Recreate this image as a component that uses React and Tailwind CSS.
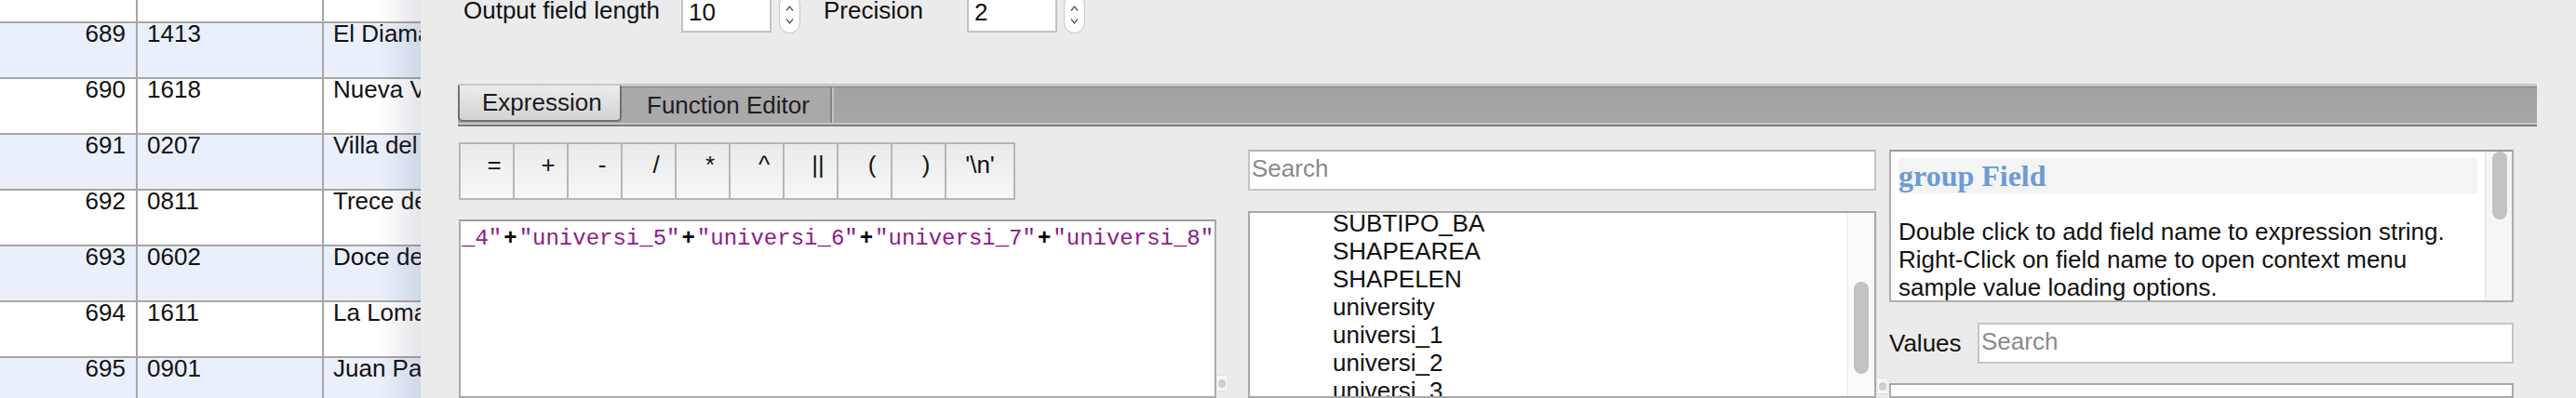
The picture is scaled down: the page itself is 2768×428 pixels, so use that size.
import React from "react";

const rows = [
  { n: 689, c: "1413", name: "El Diamante" },
  { n: 690, c: "1618", name: "Nueva Villa" },
  { n: 691, c: "0207", name: "Villa del Sol" },
  { n: 692, c: "0811", name: "Trece de Abril" },
  { n: 693, c: "0602", name: "Doce de Octubre" },
  { n: 694, c: "1611", name: "La Loma" },
  { n: 695, c: "0901", name: "Juan Pablo II" },
];

function Table() {
  return (
    <div className="relative w-[452px] shrink-0 h-full overflow-hidden bg-white">
      <div className="flex h-[25px] border-b-2 border-[#a6a6a6]">
        <div className="w-[148px] shrink-0 border-r-2 border-[#a6a6a6]" />
        <div className="w-[200px] shrink-0 border-r-2 border-[#a6a6a6]" />
        <div className="flex-1" />
      </div>
      {rows.map((r, i) => (
        <div
          key={r.n}
          className={
            i % 2 === 0
              ? "flex h-[60px] border-b-2 border-[#a6a6a6] bg-[#e9f0fc]"
              : "flex h-[60px] border-b-2 border-[#a6a6a6] bg-white"
          }
        >
          <div className="w-[148px] shrink-0 border-r-2 border-[#a6a6a6] text-right pr-[11px] leading-[22px]">
            {r.n}
          </div>
          <div className="w-[200px] shrink-0 border-r-2 border-[#a6a6a6] pl-[10px] leading-[22px]">
            {r.c}
          </div>
          <div className="flex-1 pl-[10px] whitespace-nowrap overflow-hidden leading-[22px]">
            {r.name}
          </div>
        </div>
      ))}
      <div className="absolute top-0 right-0 h-full w-[44px] bg-linear-to-r from-transparent to-[rgba(60,70,90,0.14)]" />
    </div>
  );
}

function Spinner({ className }) {
  return (
    <div
      className={
        "w-[23px] h-[42px] shrink-0 rounded-full bg-white border border-[#c4c4c4] flex flex-col items-center justify-between pt-[11px] pb-[9px] " +
        className
      }
    >
      <svg width="9" height="6" viewBox="0 0 9 6">
        <path d="M1 5.5 L4.5 1 L8 5.5" stroke="#555" fill="none" strokeWidth="1.3" />
      </svg>
      <svg width="9" height="6" viewBox="0 0 9 6">
        <path d="M1 0.5 L4.5 5 L8 0.5" stroke="#555" fill="none" strokeWidth="1.3" />
      </svg>
    </div>
  );
}

const ops = ["=", "+", "-", "/", "*", "^", "||", "(", ")"];

function Handle() {
  return (
    <div className="w-[10px] h-[18px] bg-[#f7f7f7] border-y border-[#dcdcdc] flex items-center justify-center">
      <div className="w-[8px] h-[9px] rounded-full bg-[#cfcfcf]" />
    </div>
  );
}

function Plus() {
  return <span className="text-black font-bold mx-[2px]">+</span>;
}

function Dialog() {
  return (
    <div className="flex-1 flex flex-col min-w-0 bg-[#ebebeb]">
      {/* top row */}
      <div className="flex items-start h-[42px] mt-[-6px] pl-[46px] shrink-0">
        <span className="mt-[2px] leading-[30px] w-[234px] shrink-0 whitespace-nowrap">
          Output field length
        </span>
        <div className="w-[97px] h-[41px] shrink-0 bg-white border-2 border-[#c2c2c2] pl-[6px] pt-[2px] leading-[30px]">
          10
        </div>
        <Spinner className="ml-[8px]" />
        <span className="ml-[25px] mt-[2px] leading-[30px] w-[154px] shrink-0">Precision</span>
        <div className="w-[97px] h-[41px] shrink-0 bg-white border-2 border-[#c2c2c2] pl-[6px] pt-[2px] leading-[30px]">
          2
        </div>
        <Spinner className="ml-[7px]" />
      </div>

      {/* tab bar */}
      <div className="mt-[54px] ml-[40px] w-[2234px] shrink-0 border-t-[3px] border-t-[#c8c8c8] border-b-2 border-b-[#7c7c7c]">
        <div className="h-[41px] border-t border-t-[#808080] border-b-2 border-b-[#c5c5c5] bg-linear-to-b from-[#a1a1a1] to-[#a7a7a7] flex items-start">
          <div className="mt-[-2px] h-[39px] w-[176px] shrink-0 bg-linear-to-b from-[#ececec] to-[#d2d2d2] border-x-2 border-b-2 border-[#707070] rounded-b-[5px] pl-[24px] flex items-center text-[#1a1a1a]">
            Expression
          </div>
          <div className="h-[38px] w-[226px] shrink-0 bg-[#a9a9a9] border-r-2 border-[#858585] shadow-[2px_0_0_#c3c3c3] pl-[27px] flex items-center text-[#1e1e1e]">
            Function Editor
          </div>
        </div>
      </div>

      {/* lower area */}
      <div className="flex mt-[17px] ml-[41px] flex-1 min-h-0">
        {/* left column */}
        <div className="w-[814px] shrink-0 flex flex-col">
          <div className="flex h-[62px] w-max border-y-2 border-l-2 border-[#b6b6b6]">
            {ops.map((o) => (
              <div
                key={o}
                className="w-[58px] h-full border-r-2 border-[#b6b6b6] bg-linear-to-b from-[#eaeaea] to-[#f7f7f7] flex items-center justify-center pl-[16px] pb-[14px]"
              >
                {o}
              </div>
            ))}
            <div className="w-[74px] h-full border-r-2 border-[#b6b6b6] bg-linear-to-b from-[#eaeaea] to-[#f7f7f7] flex items-center justify-center pb-[14px]">
              {"'\\n'"}
            </div>
          </div>
          <div className="mt-[21px] flex-1 bg-white border-2 border-[#acacac] border-t-[#9c9c9c] pl-[1px] pt-[5px] font-['Liberation_Mono',monospace] text-[24px] leading-[28px] text-[#8b1a89] whitespace-nowrap overflow-hidden">
            _4"<Plus />"universi_5"<Plus />"universi_6"<Plus />"universi_7"<Plus />"universi_8"
          </div>
        </div>

        {/* splitter gap */}
        <div className="w-[34px] shrink-0 pt-[250px] pl-[1px]">
          <Handle />
        </div>

        {/* middle column */}
        <div className="w-[675px] shrink-0 mt-[8px] flex flex-col">
          <div className="h-[44px] shrink-0 bg-white border-2 border-[#c3c3c3] border-t-[#b2b2b2] pl-[2px] pb-[3px] flex items-center text-[#8a8a8a]">
            Search
          </div>
          <div className="mt-[22px] flex-1 bg-white border-2 border-[#a8a8a8] flex overflow-hidden">
            <div className="flex-1 pl-[89px] mt-[-4px] leading-[30px] whitespace-nowrap">
              <div>SUBTIPO_BA</div>
              <div>SHAPEAREA</div>
              <div>SHAPELEN</div>
              <div>university</div>
              <div>universi_1</div>
              <div>universi_2</div>
              <div>universi_3</div>
              <div>universi_4</div>
            </div>
            <div className="w-[29px] shrink-0 bg-[#fafafa] border-l border-[#ececec] pl-[6px] pt-[74px]">
              <div className="w-[16px] h-[99px] rounded-full bg-[#c3c3c3]" />
            </div>
          </div>
        </div>

        {/* gap */}
        <div className="w-[14px] shrink-0 pt-[253px] pl-[2px]">
          <Handle />
        </div>

        {/* right column */}
        <div className="w-[671px] shrink-0 mt-[8px] flex flex-col">
          <div className="h-[164px] shrink-0 bg-white border-2 border-[#adadad] border-t-[#9a9a9a] flex overflow-hidden">
            <div className="flex-1 pl-[8px] pt-[7px] pr-[8px] overflow-hidden">
              <div className="h-[38px] bg-[#f4f4f4] font-['Liberation_Serif',serif] font-bold text-[32px] leading-[38px] text-[#6d9bd3]">
                group Field
              </div>
              <div className="mt-[26px] leading-[30px] whitespace-nowrap">
                Double click to add field name to expression string.
                <br />
                Right-Click on field name to open context menu
                <br />
                sample value loading options.
              </div>
            </div>
            <div className="w-[29px] shrink-0 bg-[#f6f6f6] border-l border-[#e4e4e4] pl-[7px]">
              <div className="w-[16px] h-[73px] rounded-full bg-[#c3c3c3]" />
            </div>
          </div>
          <div className="mt-[22px] h-[44px] shrink-0 flex items-center">
            <span className="w-[95px] shrink-0">Values</span>
            <div className="flex-1 h-full bg-white border-2 border-[#c5c5c5] pl-[2px] pb-[3px] flex items-center text-[#8a8a8a]">
              Search
            </div>
          </div>
          <div className="mt-[21px] flex-1 bg-white border-2 border-[#a9a9a9]" />
        </div>
      </div>
    </div>
  );
}

export default function App() {
  return (
    <div className="flex w-[2768px] h-[428px] overflow-hidden bg-[#ebebeb] font-['Liberation_Sans',Arial,sans-serif] text-[26px] text-[#111]">
      <Table />
      <Dialog />
    </div>
  );
}
